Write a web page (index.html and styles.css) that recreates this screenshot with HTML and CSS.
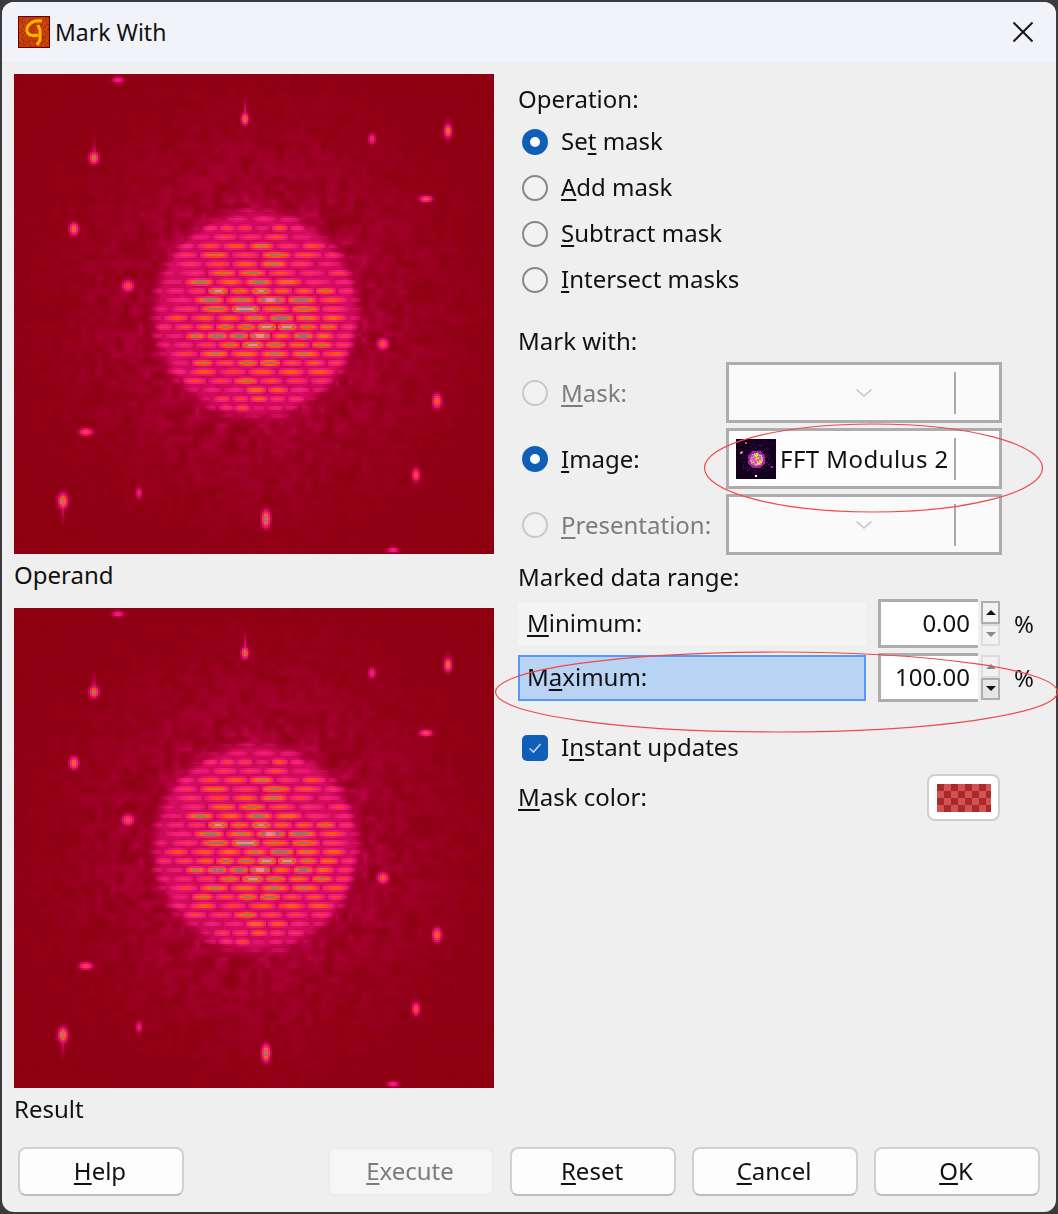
FILE: index.html
```html
<!DOCTYPE html>
<html lang="en">
<head>
    <meta charset="UTF-8">
    <title>Mark With</title>
    <link rel="stylesheet" href="styles.css">
</head>
<body>
    <div class="window">
        <div class="titlebar">
            <canvas id="appIcon" class="app-icon" width="32" height="32"></canvas>
            <span class="title">Mark With</span>
            <svg class="close" width="22" height="22" viewBox="0 0 22 22"><path d="M1.5 1.5 20.5 20.5M20.5 1.5 1.5 20.5" stroke="#1a1a1a" stroke-width="2" fill="none"/></svg>
        </div>

        <div class="content">
            <div class="previews">
                <canvas class="preview" width="240" height="240"></canvas>
                <div class="caption">Operand</div>
                <canvas class="preview" width="240" height="240"></canvas>
                <div class="caption">Result</div>
            </div>

            <div class="controls">
                <div class="heading heading-first">Operation:</div>
                <label class="option"><span class="radio checked"></span><span class="text">Se<u>t</u> mask</span></label>
                <label class="option"><span class="radio"></span><span class="text"><u>A</u>dd mask</span></label>
                <label class="option"><span class="radio"></span><span class="text"><u>S</u>ubtract mask</span></label>
                <label class="option"><span class="radio"></span><span class="text"><u>I</u>ntersect masks</span></label>

                <div class="heading heading-mark">Mark with:</div>
                <div class="source-rows">
                    <label class="option disabled"><span class="radio"></span><span><u>M</u>ask:</span></label>
                    <div class="combo">
                        <div class="combo-body empty"><svg width="18" height="10" viewBox="0 0 18 10"><path d="M1.5 1.5 9 8 16.5 1.5" stroke="#c4c4c4" stroke-width="1.6" fill="none"/></svg></div>
                        <div class="combo-sep"></div>
                    </div>
                    <label class="option"><span class="radio checked"></span><span><u>I</u>mage:</span></label>
                    <div class="combo active">
                        <div class="combo-body">
                            <canvas id="thumb" class="thumb" width="40" height="40"></canvas>
                            <span class="combo-text">FFT Modulus 2</span>
                        </div>
                        <div class="combo-sep"></div>
                    </div>
                    <label class="option disabled"><span class="radio"></span><span><u>P</u>resentation:</span></label>
                    <div class="combo">
                        <div class="combo-body empty"><svg width="18" height="10" viewBox="0 0 18 10"><path d="M1.5 1.5 9 8 16.5 1.5" stroke="#c4c4c4" stroke-width="1.6" fill="none"/></svg></div>
                        <div class="combo-sep"></div>
                    </div>
                </div>

                <div class="heading heading-range">Marked data range:</div>
                <div class="range-row">
                    <div class="range-label"><u>M</u>inimum:</div>
                    <div class="spin-input">0.00</div>
                    <div class="spin-buttons">
                        <div class="spin-btn"><span class="arrow-up"></span></div>
                        <div class="spin-btn off"><span class="arrow-down"></span></div>
                    </div>
                    <div class="unit">%</div>
                </div>
                <div class="range-row">
                    <div class="range-label selected">M<u>a</u>ximum:</div>
                    <div class="spin-input">100.00</div>
                    <div class="spin-buttons">
                        <div class="spin-btn off"><span class="arrow-up"></span></div>
                        <div class="spin-btn pressed"><span class="arrow-down"></span></div>
                    </div>
                    <div class="unit">%</div>
                </div>

                <label class="option check-row">
                    <span class="checkbox"><svg width="16" height="14" viewBox="0 0 16 14"><path d="M2.5 7.5 6.5 11 13.5 3" stroke="#b9d3f5" stroke-width="1.6" fill="none"/></svg></span>
                    <span class="text">I<u>n</u>stant updates</span>
                </label>
                <div class="color-row">
                    <span class="color-label"><u>M</u>ask color:</span>
                    <div class="color-btn"><div class="swatch"></div></div>
                </div>
            </div>
        </div>

        <div class="footer">
            <button class="btn"><u>H</u>elp</button>
            <div class="footer-right">
                <button class="btn" disabled><u>E</u>xecute</button>
                <button class="btn"><u>R</u>eset</button>
                <button class="btn"><u>C</u>ancel</button>
                <button class="btn"><u>O</u>K</button>
            </div>
        </div>
    </div>

    <!-- hand drawn annotations on top of the dialog -->
    <svg class="marks" width="1058" height="1214" viewBox="0 0 1058 1214">
        <ellipse cx="873.5" cy="468" rx="169" ry="44" stroke="#ee4a4a" stroke-width="1.2" fill="none"/>
        <ellipse cx="776.5" cy="692" rx="281" ry="40" stroke="#ee4a4a" stroke-width="1.2" fill="none"/>
    </svg>

    <script src="app.js"></script>
</body>
</html>
```

FILE: styles.css
```css
* {
    box-sizing: border-box;
}
html, body {
    margin: 0;
    height: 100%;
}
body {
    position: relative;
    width: 1058px;
    height: 1214px;
    overflow: hidden;
    background-color: #3b3b3b;
    padding: 2px;
    font-family: 'Noto Sans', 'Open Sans', sans-serif;
    font-size: 24px;
    color: #111;
}
u {
    text-underline-offset: 3px;
    text-decoration-thickness: 2px;
}
.window {
    height: 1210px;
    width: 1054px;
    background-color: #efefef;
    border-radius: 12px;
    overflow: hidden;
    display: flex;
    flex-direction: column;
}
.titlebar {
    height: 60px;
    flex: none;
    background-color: #f1f3f9;
    display: flex;
    align-items: center;
    padding: 0 22px 0 16px;
}
.app-icon {
    width: 32px;
    height: 32px;
}
.title {
    margin-left: 5px;
    flex: 1;
    font-size: 23px;
}
.content {
    flex: 1;
    display: flex;
    gap: 24px;
    padding: 12px 0 0 12px;
}
.previews {
    width: 480px;
    flex: none;
}
.preview {
    display: block;
    width: 480px;
    height: 480px;
    image-rendering: pixelated;
}
.caption {
    height: 54px;
    line-height: 42px;
}
.controls {
    flex: 1;
    padding-top: 3px;
}
.heading {
    height: 40px;
    line-height: 40px;
}
.heading-first {
    height: 42px;
    line-height: 44px;
}
.heading-mark {
    margin-top: 18px;
    margin-bottom: 1px;
}
.heading-range {
    margin-top: 2px;
    margin-bottom: 2px;
}
.option {
    height: 46px;
    display: flex;
    align-items: center;
    padding-left: 4px;
}
.text {
    margin-bottom: 4px;
}
.radio {
    width: 26px;
    height: 26px;
    flex: none;
    margin-right: 13px;
    border: 2px solid #868686;
    border-radius: 50%;
    background-color: #f2f2f2;
}
.radio.checked {
    border: 8px solid #0f5fb8;
    background-color: white;
}
.disabled {
    color: #7c7c7c;
}
.disabled .radio {
    border-color: #c9c9c9;
}
.source-rows {
    display: grid;
    grid-template-columns: 208px 276px;
    grid-auto-rows: 61px;
    row-gap: 5px;
}
.source-rows .option {
    height: 61px;
}
.combo {
    display: flex;
    align-items: center;
    border: 3px solid #adadad;
    background-color: #fafafa;
    padding-right: 43px;
}
.combo.active {
    background-color: #fdfdfd;
}
.combo-body {
    flex: 1;
    min-width: 0;
    height: 100%;
    display: flex;
    align-items: center;
    padding-left: 7px;
    white-space: nowrap;
}
.combo-body.empty {
    justify-content: center;
    padding-left: 44px;
}
.combo-text {
    letter-spacing: 0.45px;
}
.thumb {
    width: 40px;
    height: 40px;
    margin-right: 4px;
    flex: none;
    image-rendering: pixelated;
}
.combo-sep {
    width: 2px;
    height: 42px;
    flex: none;
    background-color: #a9a9a9;
}
.range-row {
    display: flex;
    align-items: center;
    height: 49px;
    margin-bottom: 5px;
}
.range-label {
    width: 348px;
    height: 42px;
    line-height: 40px;
    padding-left: 9px;
    background-color: #f4f4f4;
    flex: none;
}
.range-label.selected {
    height: 46px;
    line-height: 40px;
    background-color: #b9d3f5;
    border: 2px solid #5599ff;
    padding-left: 7px;
}
.spin-input {
    width: 100px;
    height: 49px;
    margin-left: 12px;
    flex: none;
    background-color: white;
    border: 3px solid #adadad;
    border-right: none;
    text-align: right;
    line-height: 41px;
    padding-right: 8px;
}
.spin-buttons {
    width: 19px;
    height: 45px;
    margin-left: 3px;
    flex: none;
    display: flex;
    flex-direction: column;
}
.spin-btn {
    flex: 1;
    border: 2px solid #adadad;
    background-color: #f2f2f2;
    display: flex;
    align-items: center;
    justify-content: center;
}
.spin-btn.off {
    border-color: #dcdcdc;
}
.spin-btn.pressed {
    background-color: #e6e6e6;
}
.arrow-up, .arrow-down {
    width: 0;
    height: 0;
    border-left: 5px solid transparent;
    border-right: 5px solid transparent;
}
.arrow-up {
    border-bottom: 5px solid #111;
}
.arrow-down {
    border-top: 5px solid #111;
}
.off .arrow-up {
    border-bottom-color: #8a8a8a;
}
.off .arrow-down {
    border-top-color: #8a8a8a;
}
.unit {
    margin-left: 14px;
}
.check-row {
    margin-top: 23px;
}
.checkbox {
    width: 26px;
    height: 26px;
    flex: none;
    margin-right: 13px;
    border-radius: 5px;
    background-color: #0f5fb8;
    display: flex;
    align-items: center;
    justify-content: center;
}
.color-row {
    display: flex;
    align-items: center;
    height: 47px;
    margin-top: 3px;
}
.color-label {
    width: 409px;
    margin-bottom: 2px;
}
.color-btn {
    width: 73px;
    height: 47px;
    background-color: white;
    border: 2px solid #cfcfcf;
    border-radius: 8px;
    display: flex;
    align-items: center;
    justify-content: center;
}
.swatch {
    width: 54px;
    height: 28px;
    background-color: #a82a2a;
    background-image: conic-gradient(#d45252 25%, transparent 0 50%, #d45252 0 75%, transparent 0);
    background-size: 14px 14px;
}
.footer {
    flex: none;
    height: 65px;
    display: flex;
    justify-content: space-between;
    padding: 0 16px 16px;
}
.footer-right {
    display: flex;
    gap: 16px;
}
.btn {
    width: 166px;
    height: 49px;
    font: inherit;
    color: #111;
    background-color: #fdfdfd;
    border: 2px solid #d0d0d0;
    border-bottom-color: #bdbdbd;
    border-radius: 8px;
    padding: 0 2px 2px 0;
}
.btn:disabled {
    color: #7c7c7c;
    background-color: #f6f6f6;
    border-color: #ececec;
}
.marks {
    position: absolute;
    top: 0;
    left: 0;
    pointer-events: none;
}
```

FILE: app.js
```js
// Nahrazuje bitmapy v dialogu: FFT obraz, nahled a ikonu okna
function noise(x, y) {
    let s = Math.sin(x * 127.1 + y * 311.7) * 43758.5453;
    return s - Math.floor(s);
}

// hladky sum - bilinearni mezi body mrizky
function smoothNoise(x, y, size) {
    let gx = x / size, gy = y / size;
    let ix = Math.floor(gx), iy = Math.floor(gy);
    let fx = gx - ix, fy = gy - iy;
    let top = noise(ix, iy) * (1 - fx) + noise(ix + 1, iy) * fx;
    let bottom = noise(ix, iy + 1) * (1 - fx) + noise(ix + 1, iy + 1) * fx;
    return top * (1 - fy) + bottom * fy;
}

const stops = [
    [0, 139, 0, 14],
    [0.18, 168, 0, 50],
    [0.38, 222, 16, 104],
    [0.55, 244, 32, 124],
    [0.66, 255, 60, 44],
    [0.76, 255, 98, 24],
    [0.86, 164, 122, 80],
    [0.93, 170, 100, 112],
    [1, 240, 136, 150]
];

function colorAt(v) {
    v = Math.max(0, Math.min(1, v));
    for (let i = 1; i < stops.length; i++) {
        if (v <= stops[i][0]) {
            let a = stops[i - 1], b = stops[i];
            let t = (v - a[0]) / (b[0] - a[0]);
            return [a[1] + (b[1] - a[1]) * t, a[2] + (b[2] - a[2]) * t, a[3] + (b[3] - a[3]) * t];
        }
    }
    return stops[stops.length - 1].slice(1);
}

// x, y, sirka, vyska, jas, ocas (+ dolu, - nahoru) - v pixelech obrazu (240x240)
const spots = [
    [51.5, 2.5, 3.2, 1.7, 0.55, 0],
    [115, 22, 1.9, 3, 0.9, -14],
    [178.5, 32, 2, 3, 0.55, 0],
    [216.5, 28, 2, 3.5, 0.85, -9],
    [39.5, 41.5, 2.4, 3, 0.9, -12],
    [205.5, 62, 3.4, 1.8, 0.75, 0],
    [29.5, 77, 2.4, 3.2, 0.85, 0],
    [56.5, 105.5, 3.2, 3, 0.72, 0],
    [184, 134.5, 3, 3, 0.75, 0],
    [211, 163, 2.4, 3.8, 0.8, 0],
    [35.5, 178.5, 3.6, 1.9, 0.72, 0],
    [200.5, 200, 2, 3.4, 0.75, -7],
    [62, 209, 1.7, 3.2, 0.5, 0],
    [24, 213, 2.4, 3.8, 0.95, 14],
    [125.5, 222, 2.2, 4.4, 1, -9],
    [189, 237.5, 3, 1.5, 0.6, 0]
];

function fftValue(x, y) {
    let dx = (x - 120.5) / 51, dy = (y - 119.5) / 52;
    let r = Math.sqrt(dx * dx + dy * dy);

    // slaby sum pozadi, kolem kruhu silnejsi
    let v = 0.005 + noise(x, y) * 0.015;
    v += smoothNoise(x, y, 3.5) * 0.4 * Math.exp(-(r * r) / 2.4);

    // kruh z kratkych vodorovnych pruhu
    if (r < 1.1) {
        let row = Math.round(y / 4.5);
        let dist = (y / 4.5 - row) * 2;
        let pos = (x + noise(row, 7) * 20) / (8 + noise(row, 3) * 8);
        let seg = Math.floor(pos);
        let rnd = noise(row, seg);
        let along = Math.sin(Math.PI * (pos - seg));
        let streak = Math.exp(-dist * dist * 1.1) * Math.pow(along, 0.28);
        let level = 0.98 - 0.48 * Math.pow(r, 1.5) + (rnd - 0.5) * 0.28;
        let edge = Math.max(0, Math.min(1, (1.1 - r) / 0.16));
        let disc = Math.max(0.3 * edge, level * streak * edge);
        v = Math.max(v, disc + smoothNoise(x, y, 3) * 0.05);
    }

    // svetle body s ocasem
    spots.forEach(s => {
        let ax = (x - s[0]) / s[2], ay = (y - s[1]) / s[3];
        v = Math.max(v, Math.exp(-(ax * ax + ay * ay)) * s[4]);
        if (s[5] !== 0) {
            let t = (y - s[1]) / s[5];
            if (t > 0 && t < 1) {
                let tail = (x - s[0]) / 1.1;
                v = Math.max(v, Math.exp(-tail * tail) * 0.5 * (1 - t));
            }
        }
    });
    return v;
}

function drawFFT(canvas) {
    let ctx = canvas.getContext("2d");
    let img = ctx.createImageData(240, 240);
    for (let y = 0; y < 240; y++) {
        for (let x = 0; x < 240; x++) {
            let c = colorAt(fftValue(x, y));
            let i = (y * 240 + x) * 4;
            img.data[i] = c[0];
            img.data[i + 1] = c[1];
            img.data[i + 2] = c[2];
            img.data[i + 3] = 255;
        }
    }
    ctx.putImageData(img, 0, 0);
}

function drawThumb(canvas) {
    let ctx = canvas.getContext("2d");
    let img = ctx.createImageData(40, 40);
    for (let y = 0; y < 40; y++) {
        for (let x = 0; x < 40; x++) {
            let r = Math.hypot(x - 20, y - 20);
            let n = noise(x + 3, y + 9);
            let c = [8 + n * 24, 0, 14 + n * 36];
            if (r < 16 && n > 0.82) c = [70, 12, 90];
            if (r < 9) c = [150 + n * 40, 30, 170];
            if (r < 6.5) c = n > 0.7 ? [240, 220, 60] : n > 0.45 ? [110, 220, 90] : [240, 70, 200];
            let i = (y * 40 + x) * 4;
            img.data[i] = c[0];
            img.data[i + 1] = c[1];
            img.data[i + 2] = c[2];
            img.data[i + 3] = 255;
        }
    }
    ctx.putImageData(img, 0, 0);
    [[5, 12, "#b050d0"], [9, 3, "#c040c0"], [19, 36, "#ffffff"], [35, 27, "#9040b0"], [4, 13, "#f0a040"]].forEach(p => {
        ctx.fillStyle = p[2];
        ctx.fillRect(p[0], p[1], 2, 2);
    });
}

function drawIcon(canvas) {
    let ctx = canvas.getContext("2d");
    for (let y = 0; y < 32; y++) {
        for (let x = 0; x < 32; x++) {
            let n = noise(x + 1, y + 40);
            ctx.fillStyle = `rgb(${170 + n * 50},${40 + n * 40},${10})`;
            ctx.fillRect(x, y, 1, 1);
        }
    }
    ctx.strokeStyle = "#ffb800";
    ctx.lineWidth = 3;
    ctx.beginPath();
    ctx.moveTo(24, 5);
    ctx.bezierCurveTo(14, 4, 8, 9, 9, 15);
    ctx.bezierCurveTo(10, 20, 16, 20, 20, 19);
    ctx.moveTo(20, 9);
    ctx.lineTo(22, 14);
    ctx.lineTo(22, 24);
    ctx.lineTo(19, 29);
    ctx.stroke();
    ctx.strokeStyle = "#6a0000";
    ctx.lineWidth = 1;
    ctx.strokeRect(0.5, 0.5, 31, 31);
}

document.querySelectorAll(".preview").forEach(drawFFT);
drawThumb(document.getElementById("thumb"));
drawIcon(document.getElementById("appIcon"));
```
